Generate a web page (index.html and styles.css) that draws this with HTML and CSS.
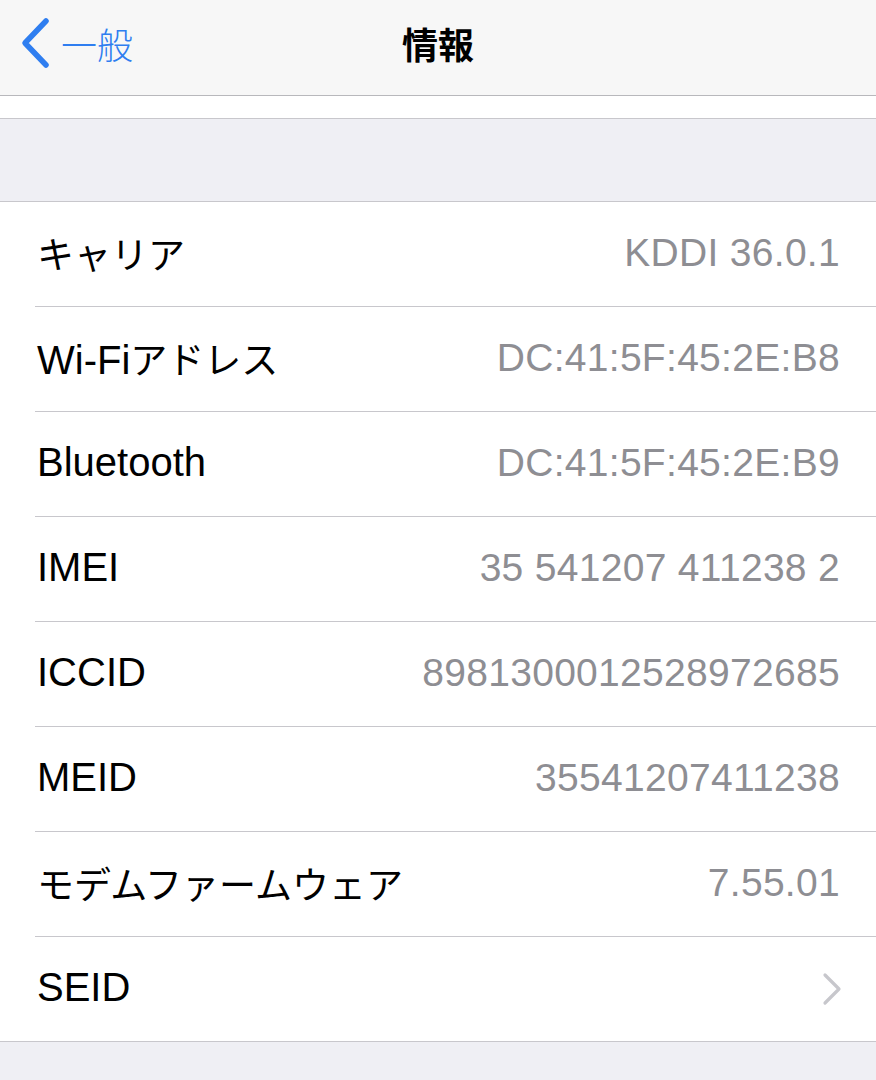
FILE: index.html
```html
<!DOCTYPE html>
<html lang="ja">
<head>
<meta charset="utf-8">
<link rel="stylesheet" href="styles.css">
</head>
<body>
<div class="screen">
  <header class="nav">
    <div class="back">
      <svg class="back-icon" width="32" height="52" viewBox="0 0 32 52"><path d="M27 4 L6 26 L27 48" fill="none" stroke="#2f7ef0" stroke-width="5.5" stroke-linecap="round" stroke-linejoin="round"/></svg>
      <span class="back-label">一般</span>
    </div>
    <div class="title">情報</div>
  </header>
  <div class="strip"></div>
  <div class="gap"></div>
  <ul class="list">
    <li class="row"><div class="inner"><span class="label ja">キャリア</span><span class="value">KDDI 36.0.1</span></div></li>
    <li class="row"><div class="inner"><span class="label">Wi-Fi<span class="ja">アドレス</span></span><span class="value">DC:41:5F:45:2E:B8</span></div></li>
    <li class="row"><div class="inner"><span class="label">Bluetooth</span><span class="value">DC:41:5F:45:2E:B9</span></div></li>
    <li class="row"><div class="inner"><span class="label">IMEI</span><span class="value">35 541207 411238 2</span></div></li>
    <li class="row"><div class="inner"><span class="label">ICCID</span><span class="value">8981300012528972685</span></div></li>
    <li class="row"><div class="inner"><span class="label">MEID</span><span class="value">35541207411238</span></div></li>
    <li class="row"><div class="inner"><span class="label ja">モデムファームウェア</span><span class="value">7.55.01</span></div></li>
    <li class="row last"><div class="inner"><span class="label">SEID</span><svg class="chev" width="20" height="34" viewBox="0 0 20 34"><path d="M3 3 L17 17 L3 31" fill="none" stroke="#c7c7cc" stroke-width="3.2" stroke-linecap="round" stroke-linejoin="round"/></svg></div></li>
  </ul>
</div>
</body>
</html>
```
FILE: styles.css
```css
* { box-sizing: border-box; }
html, body {
  margin: 0;
  padding: 0;
  background: #efeff4;
  font-family: "Liberation Sans", "Noto Sans CJK JP", sans-serif;
}
.screen {
  width: 876px;
  height: 1080px;
  overflow: hidden;
  background: #efeff4;
}
.nav {
  position: relative;
  height: 96px;
  background: #f7f7f7;
  border-bottom: 1px solid #b8b8bc;
  display: flex;
  align-items: center;
  justify-content: center;
}
.back {
  position: absolute;
  left: 19px;
  top: 17px;
  display: flex;
  align-items: center;
  gap: 10px;
}
.back-label {
  font-family: "Noto Sans CJK JP", sans-serif;
  font-size: 36px;
  color: #2f7ef0;
  line-height: 52px;
  font-weight: 300;
}
.title {
  font-family: "Noto Sans CJK JP", sans-serif;
  font-size: 36px;
  font-weight: 700;
  color: #000;
  margin-top: -10px;
}
.strip {
  height: 23px;
  background: #fff;
  border-bottom: 1px solid #c8c7cc;
}
.gap {
  height: 83px;
  border-bottom: 1px solid #c8c7cc;
}
.list {
  list-style: none;
  margin: 0;
  padding: 0;
  background: #fff;
  border-bottom: 1px solid #c8c7cc;
}
.row {
  padding-left: 35px;
}
.inner {
  height: 105px;
  padding-right: 36px;
  display: flex;
  align-items: center;
  justify-content: space-between;
  border-bottom: 1px solid #c8c7cc;
}
.row.last .inner {
  border-bottom: none;
  height: 104px;
}
.label {
  font-size: 40px;
  color: #000;
  padding-left: 2px;
  margin-top: -3px;
}
.ja {
  font-family: "Noto Sans CJK JP", sans-serif;
  font-size: 37px;
  font-weight: 400;
}
.value {
  font-size: 39px;
  color: #8e8e93;
  letter-spacing: 0.3px;
  margin-top: -3px;
}
.chev {
  margin-right: -2px;
}
```
